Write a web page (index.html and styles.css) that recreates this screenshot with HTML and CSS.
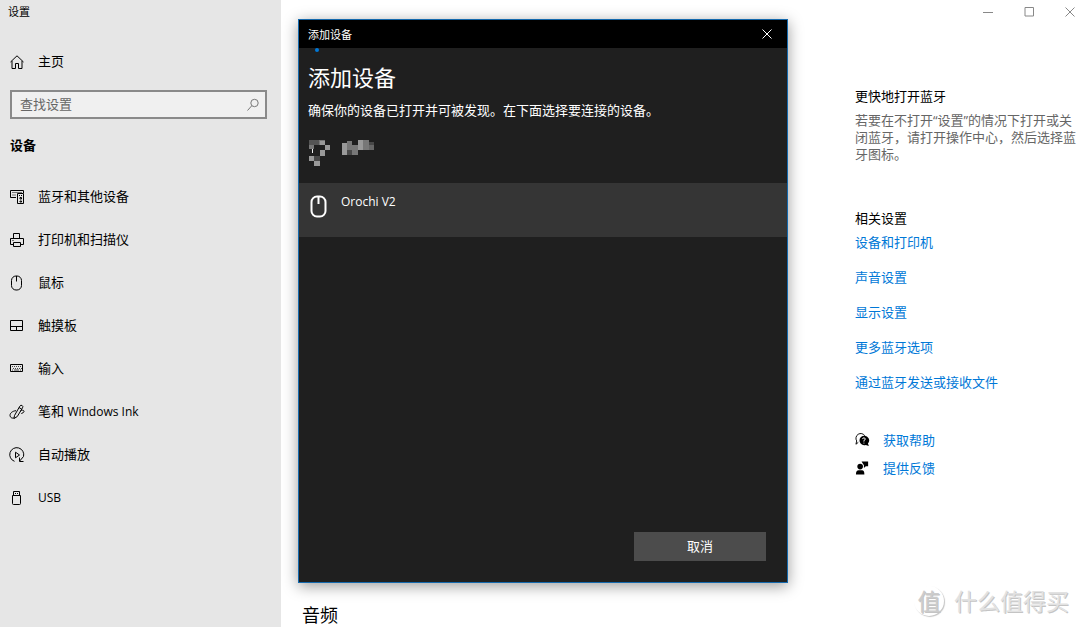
FILE: index.html
```html
<!DOCTYPE html>
<html lang="zh-CN">
<head>
<meta charset="utf-8">
<title>设置</title>
<link rel="stylesheet" href="styles.css">
</head>
<body>
<div class="window">
  <nav class="sidebar">
    <div class="app-title">设置</div>
    <a class="nav-item home" href="#"><svg class="icon" viewBox="0 0 16 16"><path d="M1.500 8 8 1.800 14.500 8M3 7v7.500h3.500v-5h3v5H13V7"/></svg>主页</a>
    <label class="search">
      <input type="text" placeholder="查找设置" aria-label="查找设置">
      <svg class="search-icon" viewBox="0 0 14 14"><circle cx="8.500" cy="5" r="3.700"/><path d="M5.800 7.700 1.500 12.500"/></svg>
    </label>
    <h2 class="section">设备</h2>
    <a class="nav-item" href="#"><svg class="icon" viewBox="0 0 16 16"><path d="M7 8.500H1.500v-7h13V4M3.500 3.500h1m1 0h1m1 0h1m1 0h1m1 0h1M3.500 6h1m1 0h1M8.500 4.500h6v10h-6zM10 6.500h1m1 0h1M11 8.500h1.500v1.500H11zM11 12h1.500v1H11z"/></svg>蓝牙和其他设备</a>
    <a class="nav-item" href="#"><svg class="icon" viewBox="0 0 16 16"><path d="M4.500 6.500v-5h6v5M4 12.500H1.500v-6h13v6H12M4.500 10.500h7v4h-7zM3.500 8.500h1"/></svg>打印机和扫描仪</a>
    <a class="nav-item" href="#"><svg class="icon" viewBox="0 0 16 16"><rect x="2.500" y="1" width="10" height="14" rx="4.500"/><path d="M7.500 1v5.500"/></svg>鼠标</a>
    <a class="nav-item" href="#"><svg class="icon" viewBox="0 0 16 16"><path d="M1.500 2.500h12v10h-12zM1.500 8.500h12M7.500 8.500v4"/></svg>触摸板</a>
    <a class="nav-item" href="#"><svg class="icon" viewBox="0 0 16 16"><path d="M1.500 3.500h12v7h-12z"/><path class="fine" d="M3 5.500h1m1 0h1m1 0h1m1 0h1m1 0h1M4 7.500h1m1 0h1m1 0h1m1 0h1m1 0h1M3 9h1m1 0h5m1 0h1"/></svg>输入</a>
    <a class="nav-item" href="#"><svg class="icon" viewBox="0 0 16 16"><path d="M5.500 11.500 10.800 2.200q1-1.500 2.300-.7t.4 2.300L8.300 12.500 5 14.500zM10 3.500l2.600 1.600M7 6.700C3.500 7 1 9 1 11.500c0 2 2 3 4 2.500M11 7.500c2-2 4-1.500 4 0s-2.500 1-2.500 2.500"/></svg><span>笔和 <span class="latin">Windows Ink</span></span></a>
    <a class="nav-item" href="#"><svg class="icon" viewBox="0 0 16 16"><path d="M5.500 14.300A7 7 0 1 1 14.500 9.500L10.700 14M10.500 10.500v4h4M6.500 5.200v5.600L10.500 8z"/></svg>自动播放</a>
    <a class="nav-item" href="#"><svg class="icon" viewBox="0 0 16 16"><path d="M3.500 5.500h8v8q0 1-1 1h-6q-1 0-1-1zM4.500 5V1.500h6V5M6 3.500h1m1 0h1"/></svg><span class="latin">USB</span></a>
  </nav>

  <main class="content">
    <h2 class="audio">音频</h2>
    <section class="dialog" role="dialog" aria-labelledby="dialog-title">
      <header class="dialog-bar">
        <span>添加设备</span>
        <button class="dialog-close" aria-label="关闭"><svg viewBox="0 0 10 10"><path d="M.5.5l9 9M9.500.5l-9 9"/></svg></button>
      </header>
      <div class="progress"></div>
      <div class="dialog-head">
        <h1 id="dialog-title">添加设备</h1>
        <p>确保你的设备已打开并可被发现。在下面选择要连接的设备。</p>
      </div>
      <button class="device" aria-label="设备">
        <svg class="mosaic" viewBox="0 0 66 28">
          <path fill="#555" d="M0 0h10v5H0zM43 10h5v5h-5z"/>
          <path fill="#777" d="M10 0h6v5h-6zM0 5h5v4H0zM38 1h5v9h-5zM54 0h6v10h-6zM43 5h6v10h-6z"/>
          <path fill="#999" d="M11 1h5v4h-5zM16 5h5v5h-5zM11 10h5v6h-5zM0 16h5v5H0zM5 21h6v5H5zM33 3h5v12h-5zM49 0h5v10h-5z"/>
          <path fill="#484848" d="M5 16h6v5H5zM38 10h5v5h-5zM60 2h5v3h-5z"/>
          <path fill="#666" d="M60 5h5v5h-5z"/>
          <path fill="#eee" d="M3 9h1v4H3z"/>
        </svg>
      </button>
      <button class="device selected">
        <svg class="device-icon" viewBox="0 0 20 24"><rect x="2.500" y="1.500" width="14" height="20" rx="5.500"/><path d="M9.500 2v7"/></svg>
        <span class="latin">Orochi V2</span>
      </button>
      <footer class="dialog-foot"><button class="cancel">取消</button></footer>
    </section>
  </main>

  <aside class="side">
    <div class="controls">
      <button aria-label="最小化"><svg viewBox="0 0 10 10"><path d="M0 5.500h10"/></svg></button>
      <button aria-label="最大化"><svg viewBox="0 0 10 10"><path d="M1 .5h8.500V9H1z"/></svg></button>
      <button aria-label="关闭"><svg viewBox="0 0 10 10"><path d="M.5.5l9 9M9.500.5l-9 9"/></svg></button>
    </div>
    <section class="tips">
      <h3>更快地打开蓝牙</h3>
      <p>若要在不打开“设置”的情况下打开或关闭蓝牙，请打开操作中心，然后选择蓝牙图标。</p>
    </section>
    <section class="related">
      <h3>相关设置</h3>
      <a href="#">设备和打印机</a>
      <a href="#">声音设置</a>
      <a href="#">显示设置</a>
      <a href="#">更多蓝牙选项</a>
      <a href="#">通过蓝牙发送或接收文件</a>
    </section>
    <section class="support">
      <a href="#"><svg viewBox="0 0 16 16"><path d="M3.500 10.500 1 12.500l.8-3.500A5 5 0 1 1 10.500 3.500" fill="none" stroke="#000"/><path d="M9.500 3.500a5 5 0 1 0 2 9.700l3.300 1.300-1-2.700A5 5 0 0 0 9.500 3.500z"/><path d="M8 7q.2-1.300 1.500-1.300T11 6.900Q11 8 9.500 8.500v1.200M9.500 10.800v1" fill="none" stroke="#fff"/></svg>获取帮助</a>
      <a href="#"><svg viewBox="0 0 16 16"><circle cx="5.500" cy="6.500" r="3"/><path d="M1 15q0-4.500 3-4.500h3.500Q10 10.500 10 15zM7 1h7v5h-2.500L9.500 8V5z"/></svg>提供反馈</a>
    </section>
  </aside>

  <div class="watermark"><span class="seal">值</span><span>什么值得买</span></div>
</div>
</body>
</html>
```
FILE: styles.css
```css
* { box-sizing: border-box; }

body {
  margin: 0;
  background: #fff;
  color: #000;
  font: 13px/17px "Open Sans", "Noto Sans CJK SC", sans-serif;
}

h1, h2, h3, p { margin: 0; font-size: 13px; font-weight: 400; }
a { color: #0078d7; text-decoration: none; }
button { border: 0; padding: 0; font: inherit; color: inherit; background: none; }
svg { display: block; flex: none; }
.latin { font-size: 12px; }

.window {
  position: relative;
  display: flex;
  min-height: 100vh;
  overflow: hidden;
}

/* Sidebar */
.sidebar {
  flex: 0 0 281px;
  background: #e6e6e6;
}

.app-title {
  padding: 3px 8px 0;
  height: 40px;
  font-size: 11px;
}

.nav-item {
  display: flex;
  align-items: center;
  gap: 13px;
  height: 43px;
  padding-left: 9px;
  color: #000;
}

.icon {
  width: 16px;
  height: 16px;
  fill: none;
  stroke: #000;
}

.fine { opacity: .7; }

.search {
  display: flex;
  align-items: center;
  height: 29px;
  margin: 7px 14px 0 10px;
  padding: 0 5px 0 8px;
  border: 2px solid #8a8a8a;
  background: #f0f0f0;
}

.search input {
  flex: 1;
  min-width: 0;
  border: 0;
  padding: 0;
  outline: 0;
  background: none;
  font: inherit;
}

.search input::placeholder { color: #666; opacity: 1; }

.search-icon {
  width: 14px;
  height: 14px;
  fill: none;
  stroke: #777;
}

.section {
  margin: 18px 10px 21px;
  font-weight: 700;
}

/* Content and dialog */
.content {
  position: relative;
  flex: 1;
  padding: 602px 0 0 21px;
  height: 100vh;
}

.audio { font-size: 18px; line-height: 26px; }

.dialog {
  position: absolute;
  top: 19px;
  left: 17px;
  right: 66px;
  height: 564px;
  display: flex;
  flex-direction: column;
  border: 1px solid #1469ad;
  background: #1f1f1f;
  color: #fff;
  box-shadow: 0 3px 14px rgba(0, 0, 0, .4);
}

.dialog-bar {
  display: flex;
  align-items: center;
  justify-content: space-between;
  height: 28px;
  padding-left: 9px;
  background: #000;
  font-size: 11px;
}

.dialog-close { padding: 9px 15px; }
.dialog-close svg { width: 10px; height: 10px; stroke: #fff; }

.progress {
  width: 4px;
  height: 4px;
  margin-left: 16px;
  border-radius: 50%;
  background: #0078d7;
}

.dialog-head { padding: 10px 9px 0; }
.dialog-head h1 { font-size: 22px; line-height: 30px; }
.dialog-head p { margin-top: 10px; }

.device {
  display: flex;
  align-items: flex-start;
  gap: 12px;
  height: 54px;
  padding: 11px 10px;
  text-align: left;
}

.dialog-head + .device { margin-top: 10px; }
.selected { background: #353535; }
.selected .latin { line-height: 16px; }
.mosaic { width: 66px; height: 28px; }
.device-icon { width: 20px; height: 24px; margin-top: 1px; fill: none; stroke: #fff; stroke-width: 2; }

.dialog-foot {
  display: flex;
  justify-content: flex-end;
  margin-top: auto;
  padding: 21px;
}

.cancel {
  width: 132px;
  height: 29px;
  background: #4c4c4c;
}

/* Right column */
.side { flex: 0 0 226px; padding-left: 1px; }

.controls {
  display: flex;
  justify-content: flex-end;
  gap: 31px;
  height: 88px;
  padding: 7px 5px 0 0;
}

.controls button { height: 10px; }
.controls svg { width: 10px; height: 10px; fill: none; stroke: #888; }

.tips p { margin-top: 7px; color: #666; }
.related { margin-top: 47px; }
.related h3 { margin-bottom: 7px; }
.related a { display: block; margin-bottom: 18px; }

.support { margin-top: 35px; }
.support a { display: flex; align-items: center; gap: 13px; height: 28px; }
.support svg { width: 15px; height: 16px; }

/* Watermark over the page corner */
.watermark {
  position: absolute;
  right: 11px;
  bottom: 11px;
  display: flex;
  align-items: center;
  gap: 10px;
  color: #e2e2e2;
  font-size: 23px;
  line-height: 30px;
  text-shadow: 1px 1px #c4c4c4;
}

.seal {
  width: 30px;
  height: 30px;
  border-radius: 50%;
  box-shadow: 1px 1px 1px #c4c4c4;
  color: #ccc;
  text-align: center;
}
```
